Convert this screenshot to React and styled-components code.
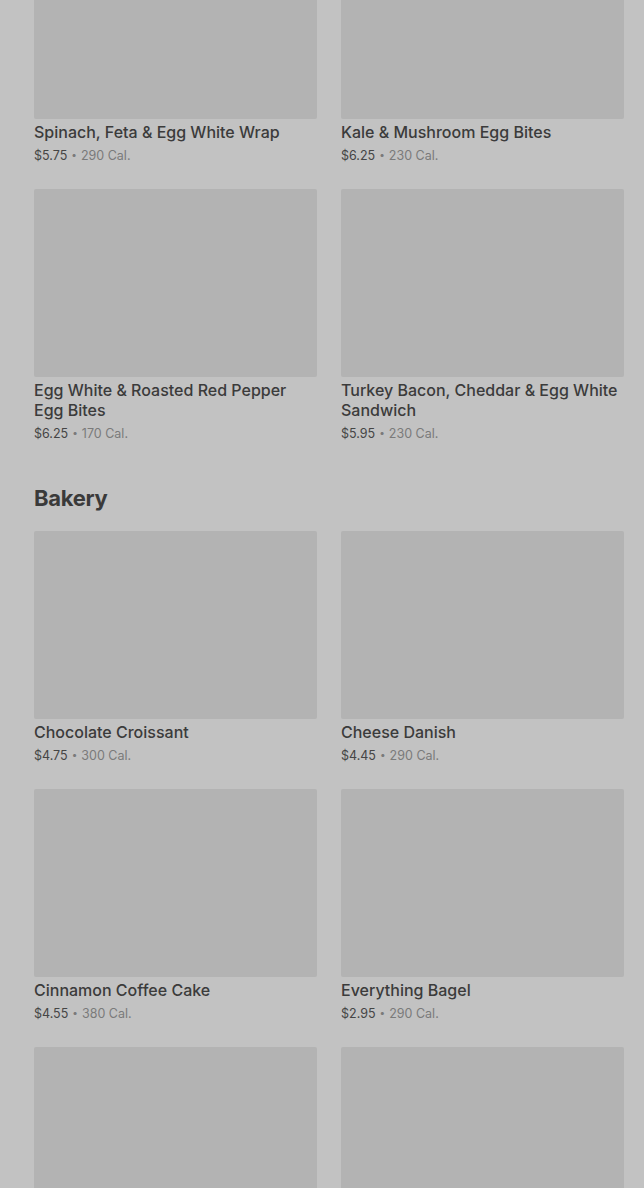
import React from "react";
import styled, { createGlobalStyle } from "styled-components";

const Global = createGlobalStyle`
  html, body { margin: 0; padding: 0; background: #c2c2c2; }
  html { height: 1188px; overflow: hidden; }
  body { font-family: Inter, "Noto Sans", sans-serif; }
`;

const Page = styled.div`
  margin-top: -69px;
  padding: 0 20px 0 34px;
`;

const Section = styled.section`
  & + & { margin-top: 41px; }
`;

const Heading = styled.h2`
  margin: 0 0 19px;
  font-size: 22px;
  line-height: 28px;
  font-weight: 700;
  letter-spacing: -0.3px;
  color: #3a3a3a;
`;

const Grid = styled.div`
  display: grid;
  grid-template-columns: 283px 283px;
  column-gap: 24px;
  row-gap: 24px;
`;

const Card = styled.div`
  display: flex;
  flex-direction: column;
`;

const Thumb = styled.div`
  height: 188px;
  background: #b3b3b3;
  border-radius: 2px;
`;

const Title = styled.div`
  margin-top: 3px;
  font-size: 16px;
  line-height: 20px;
  font-weight: 500;
  color: #3b3b3b;
`;

const Meta = styled.div`
  margin-top: 5px;
  height: 18px;
  font-size: 12.5px;
  line-height: 18px;
  color: #7a7a7a;
`;

const Price = styled.span`
  color: #454545;
`;

const Dot = styled.span`
  font-size: 10px;
  line-height: 0;
  vertical-align: 2.5px;
  margin: 0 0.5px;
`;

const breakfast = [
  ["Spinach, Feta & Egg White Wrap", "$5.75", "290"],
  ["Kale & Mushroom Egg Bites", "$6.25", "230"],
  ["Egg White & Roasted Red Pepper Egg Bites", "$6.25", "170"],
  ["Turkey Bacon, Cheddar & Egg White Sandwich", "$5.95", "230"],
];

const bakery = [
  ["Chocolate Croissant", "$4.75", "300"],
  ["Cheese Danish", "$4.45", "290"],
  ["Cinnamon Coffee Cake", "$4.55", "380"],
  ["Everything Bagel", "$2.95", "290"],
  ["Blueberry Muffin", "$3.45", "360"],
  ["Butter Croissant", "$3.75", "260"],
];

function Item({ item }) {
  const [name, price, cal] = item;
  return (
    <Card>
      <Thumb />
      <Title>{name}</Title>
      <Meta>
        <Price>{price}</Price> <Dot>•</Dot> {cal} Cal.
      </Meta>
    </Card>
  );
}

export default function App() {
  return (
    <>
      <Global />
      <Page>
        <Section>
          <Grid>
            {breakfast.map((it) => (
              <Item key={it[0]} item={it} />
            ))}
          </Grid>
        </Section>
        <Section>
          <Heading>Bakery</Heading>
          <Grid>
            {bakery.map((it) => (
              <Item key={it[0]} item={it} />
            ))}
          </Grid>
        </Section>
      </Page>
    </>
  );
}
